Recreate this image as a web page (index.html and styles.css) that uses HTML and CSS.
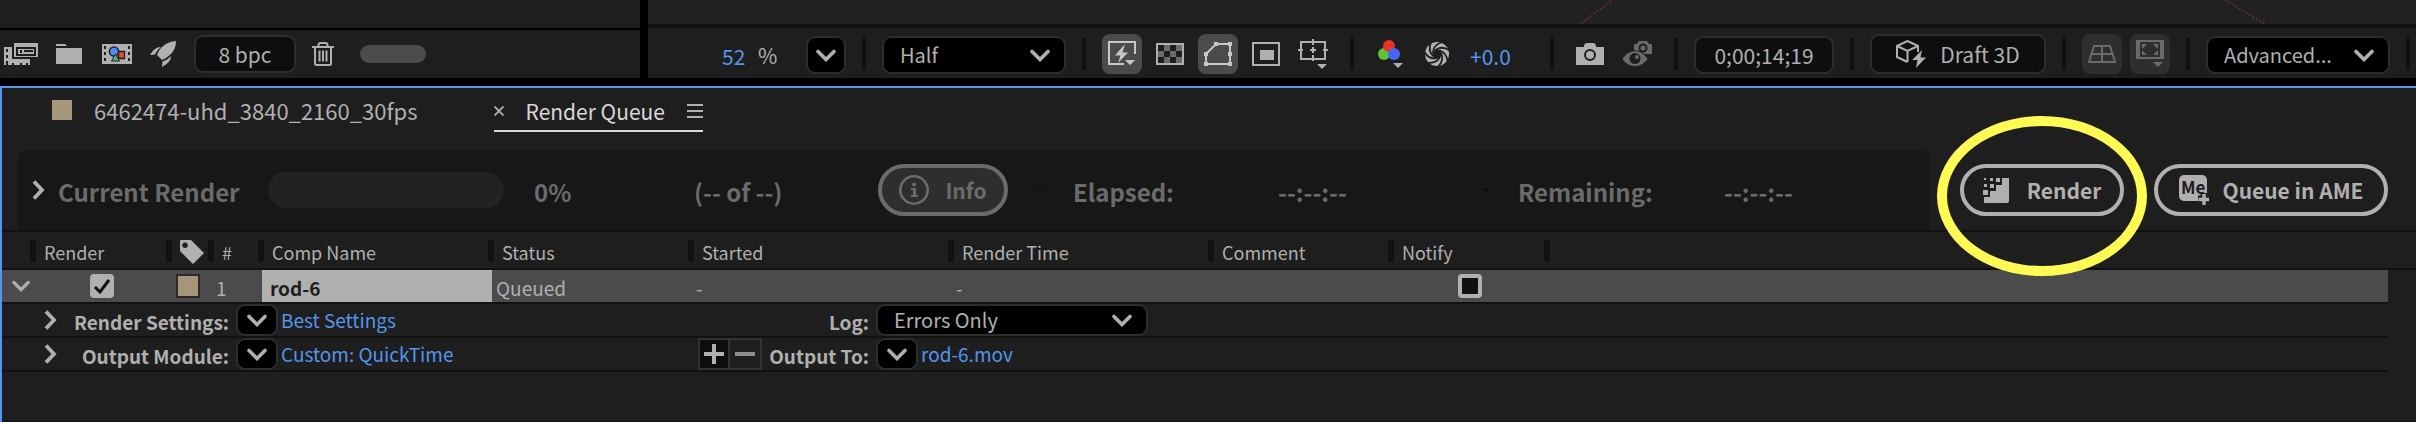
FILE: index.html
```html
<!DOCTYPE html>
<html lang="en">
<head>
<meta charset="utf-8">
<title>Render Queue</title>
<link rel="stylesheet" href="styles.css">
</head>
<body>
<svg class="defs" aria-hidden="true">
  <symbol id="chev-down" viewBox="0 0 20 13"><path d="M2 2.5 10 10.500 18 2.500" fill="none" stroke="currentColor" stroke-width="3.600" stroke-linecap="round"/></symbol>
  <symbol id="chev-right" viewBox="0 0 13 20"><path d="M2 1.500 10 10 2 18.500" fill="none" stroke="currentColor" stroke-width="3.800" stroke-linecap="butt"/></symbol>
</svg>
<div class="workspace">
  <section class="project" aria-label="Project">
    <div class="project-list"></div>
    <div class="toolbar project-tools">
      <button class="icon" aria-label="Interpret footage"><svg width="34" height="22" viewBox="0 0 34 22"><path d="M0 4h8v12h18v6H0z" fill="#b0b0b0"/><path d="M2 6h2v3H2zM2 12h2v3H2zM2 18h2v4H2zM8 20h2v2H8zM16 20h2v2h-2zM22 20h2v2h-2z" fill="#1e1e1e"/><path d="M10 0h24v14H10z" fill="#b0b0b0"/><path d="M12 4h20v9H12z" fill="#1e1e1e"/><path d="M14 6h16v5H14z" fill="#b0b0b0"/><path d="M16 7h2v3h-2zM20 7h9v2h-9z" fill="#1e1e1e"/></svg></button>
      <button class="icon" aria-label="New folder"><svg width="26" height="20" viewBox="0 0 26 20"><path d="M0 0h9l2 2H0zM0 4h25q1 0 1 1v14q0 1-1 1H1q-1 0-1-1z" fill="#b0b0b0"/></svg></button>
      <button class="icon film" aria-label="New composition"><svg width="30" height="20" viewBox="0 0 30 20"><path d="M0 0h30v20H0z" fill="#b0b0b0"/><path d="M2 2h2v3H2zM2 8h2v3H2zM2 14h2v3H2zM26 2h2v3h-2zM26 8h2v3h-2zM26 14h2v3h-2z" fill="#1e1e1e"/><circle cx="12" cy="7.500" r="4.600" fill="#4b8df8" stroke="#1e1e1e" stroke-width="1.500"/><path d="M16.500 7.500h6v7h-6z" fill="#e34b35" stroke="#1e1e1e" stroke-width="1.300"/><path d="M13.500 10 17.500 17H9.500z" fill="#4fb286" stroke="#1e1e1e"/></svg></button>
      <button class="icon" aria-label="Project settings"><svg width="26" height="26" viewBox="0 0 26 26"><path d="M26 0C26 9 21 15 12 19L7 14C10 6 16 1 26 0zM11 6C6 6 3 9 0 14L5 13.500C6.500 10 8.500 8 11 6zM21 15C21 20 17 23 12 26L12.500 20.500C16 19.500 19 17.500 21 15z" fill="#b0b0b0"/></svg></button>
      <button class="field depth">8 bpc</button>
      <button class="icon trash" aria-label="Delete"><svg width="22" height="24" viewBox="0 0 22 24"><path d="M0 5h22M6.500 5V3Q6.500 1 8.500 1h5Q15.500 1 15.500 3V5M3 5V21.500Q3 23 4.500 23h13Q19 23 19 21.500V5M7.500 8.500v11M11 8.500v11M14.500 8.500v11" fill="none" stroke="#b0b0b0" stroke-width="2"/></svg></button>
      <span class="scroll-thumb"></span>
    </div>
  </section>
  <section class="viewer" aria-label="Composition viewer">
    <svg class="canvas" aria-hidden="true"><g stroke="#54302c" stroke-width="2" stroke-dasharray="2 2"><path d="M933 24 964 0M1577 0 1617 24"/></g></svg>
    <div class="toolbar viewer-tools">
      <span class="zoom-value">52</span><span class="zoom-unit">%</span>
      <button class="field drop" aria-label="Magnification"><svg class="cd"><use href="#chev-down"/></svg></button>
      <span class="divider"></span>
      <div class="select-wrap"><select class="field wide" aria-label="Resolution"><option>Half</option></select><svg class="cd"><use href="#chev-down"/></svg></div>
      <span class="divider"></span>
      <div class="view-toggles">
        <button class="toggle on" aria-label="Fast previews"><svg width="28" height="26" viewBox="0 0 28 26"><path d="M16 24H1V2H27V14" fill="none" stroke="#c8c8c8" stroke-width="2" transform="translate(0 -1)"/><path d="M17 3 7 14.500h5.500L10 22 20 11.500h-5.500zM17 19h10l-5 5z" fill="#c8c8c8"/></svg></button>
        <button class="icon" aria-label="Transparency grid"><svg width="28" height="22" viewBox="0 0 28 22"><path d="M0 0h28v22H0z" fill="#b0b0b0"/><path d="M2 2h24v18H2z" fill="#6b6b6b"/><path d="M2 2h6v6H2zM14 2h6v6h-6zM8 8h6v6H8zM20 8h6v6h-6zM2 14h6v6H2zM14 14h6v6h-6z" fill="#1e1e1e"/></svg></button>
        <button class="toggle on" aria-label="Mask visibility"><svg width="28" height="24" viewBox="0 0 28 24"><path d="M2 12 12 2H26V22H2z" fill="none" stroke="#c8c8c8" stroke-width="2"/><path d="M10 0h4v4h-4zM24 0h4v4h-4zM0 10h4v4H0zM24 10h4v4h-4zM0 20h4v4H0zM24 20h4v4h-4z" fill="#c8c8c8"/></svg></button>
        <button class="icon" aria-label="Region of interest"><svg width="28" height="24" viewBox="0 0 28 24"><path d="M1 1h26v22H1z" fill="none" stroke="#b0b0b0" stroke-width="2"/><path d="M8 8h14v10H8z" fill="#b0b0b0"/></svg></button>
        <button class="icon guides" aria-label="Guides"><svg width="30" height="30" viewBox="0 0 30 30"><path d="M3 3h24v17H3zM15 0v6M15 16v6M0 11h5M25 11h5M12 11h6M15 8v6" fill="none" stroke="#b0b0b0" stroke-width="2"/><path d="M19 25h10l-5 5z" fill="#b0b0b0"/></svg></button>
      </div>
      <span class="divider wide-gap"></span>
      <button class="icon" aria-label="Channels"><svg width="26" height="30" viewBox="0 0 26 30"><circle cx="6" cy="15" r="6" fill="#5ec23c"/><circle cx="11" cy="7" r="6" fill="#ea3323"/><circle cx="16" cy="15" r="6" fill="#4866f6"/><path d="M15 24h10l-5 5z" fill="#b0b0b0"/></svg></button>
      <button class="icon aperture" aria-label="Exposure"><svg width="26" height="26" viewBox="0 0 26 26"><circle cx="13" cy="13" r="12" fill="#b0b0b0"/><circle cx="13" cy="13" r="4.500" fill="#1e1e1e"/><g fill="none" stroke="#1e1e1e" stroke-width="1.800"><path id="blade" d="M9 12C9 7 12 3 18 1"/><use href="#blade" transform="rotate(51 13 13)"/><use href="#blade" transform="rotate(103 13 13)"/><use href="#blade" transform="rotate(154 13 13)"/><use href="#blade" transform="rotate(206 13 13)"/><use href="#blade" transform="rotate(257 13 13)"/><use href="#blade" transform="rotate(309 13 13)"/></g></svg></button>
      <span class="exposure">+0.0</span>
      <span class="divider"></span>
      <div class="snapshots">
        <button class="icon" aria-label="Take snapshot"><svg width="28" height="22" viewBox="0 0 28 22"><path d="M0 4H8V2L10 0H18L20 2V4H28V22H0z" fill="#b0b0b0"/><circle cx="14" cy="12" r="5" fill="#b0b0b0" stroke="#1e1e1e" stroke-width="2"/></svg></button>
        <button class="icon" aria-label="Show snapshot"><svg width="30" height="26" viewBox="0 0 30 26"><path d="M12 3h3l2-3h8l2 3h3v10H12z" fill="#6b6b6b"/><circle cx="21" cy="7" r="3.500" fill="#6b6b6b" stroke="#1e1e1e" stroke-width="2"/><path d="M0 18C7 7 19 7 26 18C19 28 7 28 0 18z" fill="#6b6b6b" stroke="#1e1e1e"/><circle cx="13" cy="17.500" r="5.500" fill="#1e1e1e"/><circle cx="15" cy="16" r="2" fill="#6b6b6b"/></svg></button>
      </div>
      <span class="divider"></span>
      <button class="field time">0;00;14;19</button>
      <span class="divider"></span>
      <button class="field draft"><svg width="30" height="28" viewBox="0 0 30 28"><path d="M22 12V6L11.500 1 1 6V17L11.500 22M1 6 11.500 11 22 6M11.500 11V22" fill="none" stroke="#b0b0b0" stroke-width="2"/><path d="M26 10 16 20h5.500L20 28 30 17.500h-5.500z" fill="#b0b0b0"/></svg>Draft 3D</button>
      <span class="divider"></span>
      <div class="three-d">
        <button class="toggle off" aria-label="Ground plane"><svg width="28" height="18" viewBox="0 0 28 18"><path d="M6 1H22L27 17H1zM4 9H24M14 1V17" fill="none" stroke="#6b6b6b" stroke-width="2"/></svg></button>
        <button class="toggle off" aria-label="Extended viewer"><svg width="28" height="28" viewBox="0 0 28 28"><path d="M1 1h26v17H1z" fill="none" stroke="#6b6b6b" stroke-width="2"/><path d="M3 0v18M25 0v18" stroke="#6b6b6b" stroke-width="2"/><path d="M6 4h5L6 9zM22 4h-5l5 5zM6 15h5l-5-5zM22 15h-5l5-5zM17 22h10l-5 5z" fill="#6b6b6b"/></svg></button>
      </div>
      <span class="divider"></span>
      <div class="select-wrap"><select class="field wide" aria-label="Renderer"><option>Advanced...</option></select><svg class="cd"><use href="#chev-down"/></svg></div>
      <span class="divider last"></span>
    </div>
  </section>
</div>

<main class="queue">
  <nav class="tabs">
    <button class="tab file"><span class="swatch"></span>6462474-uhd_3840_2160_30fps</button>
    <div class="tab active">
      <button class="icon" aria-label="Close tab"><svg width="10" height="10" viewBox="0 0 10 10"><path d="M.5.5l9 9M9.500.5l-9 9" stroke="#b0b0b0" stroke-width="1.800"/></svg></button>
      <span>Render Queue</span>
      <button class="icon" aria-label="Panel menu"><svg width="16" height="14" viewBox="0 0 16 14"><path d="M0 1h16M0 7h16M0 13h16" stroke="#b0b0b0" stroke-width="2"/></svg></button>
    </div>
  </nav>

  <div class="status">
    <div class="current">
      <div class="current-title"><button class="icon" aria-label="Expand current render"><svg class="cr"><use href="#chev-right"/></svg></button><span class="text">Current Render</span></div>
      <div class="progress" role="progressbar" aria-label="Progress" aria-valuenow="0"></div>
      <span class="text percent">0%</span>
      <span class="text">(-- of --)</span>
      <button class="pill info" disabled><svg width="30" height="30" viewBox="0 0 30 30"><circle cx="15" cy="15" r="13.700" fill="none" stroke="#6b6b6b" stroke-width="2.600"/><circle cx="15" cy="9.500" r="2" fill="#6b6b6b"/><path d="M12 13h5v7h2v2h-7v-2h2v-5h-2z" fill="#6b6b6b"/></svg>Info</button>
      <span class="tick first"></span>
      <span class="text">Elapsed:</span>
      <span class="text">--:--:--</span>
      <span class="tick"></span>
      <span class="text">Remaining:</span>
      <span class="text">--:--:--</span>
    </div>
    <div class="actions">
      <div class="highlighted">
        <button class="pill"><svg width="26" height="26" viewBox="0 0 26 26"><path d="M26 1V24q0 2-2 2H1V20H7V14H13V8H19V1z" fill="#b0b0b0"/><path d="M1 1h2v2H1zM7 1h3v3H7zM13 1h4v4h-4zM1 7h3v3H1zM7 7h4v4H7zM0 13h5v5H0z" fill="#b0b0b0"/></svg>Render</button>
        <span class="ring"></span>
      </div>
      <button class="pill ame"><svg width="30" height="30" viewBox="0 0 30 30"><rect width="28" height="26" rx="5" fill="#b0b0b0"/><path d="M25 18v12M19 24h12" stroke="#1e1e1e" stroke-width="7"/><text class="me" x="2" y="19">Me</text><path d="M25 19v11M19.500 24.500h11" stroke="#b0b0b0" stroke-width="3.400"/></svg>Queue in AME</button>
    </div>
  </div>

  <table class="items">
    <colgroup><col class="c-arrow"><col class="c-render"><col class="c-tag"><col class="c-num"><col class="c-comp"><col class="c-status"><col class="c-started"><col class="c-time"><col class="c-comment"><col class="c-notify"><col><col class="c-edge"></colgroup>
    <thead><tr>
      <th></th><th>Render</th>
      <th class="tag"><svg width="24" height="24" viewBox="0 0 24 24" aria-label="Label"><path d="M0 1q0-1 1-1H11L24 13 13 24 0 11zM5 2.500a2.800 2.800 0 1 0 .01 0z" fill="#b0b0b0" fill-rule="evenodd"/></svg></th>
      <th>#</th><th>Comp Name</th><th>Status</th><th>Started</th><th>Render Time</th><th>Comment</th><th>Notify</th><th></th><th class="plain"></th>
    </tr></thead>
    <tbody>
      <tr class="selected">
        <td class="fold"><button class="icon" aria-label="Collapse item"><svg class="cd small"><use href="#chev-down"/></svg></button></td>
        <td class="center"><label class="check"><input type="checkbox" checked aria-label="Render item"><svg width="24" height="24" viewBox="0 0 24 24"><path d="M5 13 10 18 19 6" fill="none" stroke="#111" stroke-width="3"/></svg></label></td>
        <td class="tag"><span class="swatch framed"></span></td>
        <td>1</td><td class="name">rod-6</td><td>Queued</td><td>-</td><td>-</td><td></td>
        <td class="center notify"><label class="check"><input type="checkbox" aria-label="Notify"></label></td><td></td><td class="edge"></td>
      </tr>
      <tr><td class="detail" colspan="11"><div class="grid">
        <button class="icon unfold" aria-label="Expand render settings"><svg class="cr"><use href="#chev-right"/></svg></button>
        <b>Render Settings:</b>
        <button class="field mini" aria-label="Render settings template"><svg class="cd"><use href="#chev-down"/></svg></button>
        <a href="#">Best Settings</a>
        <span></span>
        <b><label for="log">Log:</label></b>
        <div class="select-wrap"><select id="log" class="field log"><option>Errors Only</option></select><svg class="cd"><use href="#chev-down"/></svg></div>
      </div></td><td class="edge"></td></tr>
      <tr><td class="detail" colspan="11"><div class="grid">
        <button class="icon unfold" aria-label="Expand output module"><svg class="cr"><use href="#chev-right"/></svg></button>
        <b>Output Module:</b>
        <button class="field mini" aria-label="Output module template"><svg class="cd"><use href="#chev-down"/></svg></button>
        <a href="#">Custom: QuickTime</a>
        <span class="stepper"><button aria-label="Add output module"><svg width="20" height="20"><path d="M10 0v20M0 10h20" stroke="#b0b0b0" stroke-width="4"/></svg></button><button class="minus" aria-label="Remove output module"><svg width="20" height="20"><path d="M0 10h20" stroke="#8c8c8c" stroke-width="4"/></svg></button></span>
        <b>Output To:</b>
        <span class="target"><button class="field mini" aria-label="Output file template"><svg class="cd"><use href="#chev-down"/></svg></button><a href="#">rod-6.mov</a></span>
      </div></td><td class="edge"></td></tr>
    </tbody>
  </table>
  <div class="rest"></div>
</main>
</body>
</html>
```
FILE: styles.css
```css
* { box-sizing: border-box; }
body {
  margin: 0;
  min-height: 100vh;
  display: flex;
  flex-direction: column;
  gap: 8px;
  overflow: hidden;
  background: #000;
  color: #b0b0b0;
  font: 21px/28px "Noto Sans CJK SC", "Noto Sans", sans-serif;
  white-space: nowrap;
}
button, select, input { margin: 0; font: inherit; color: inherit; }
button { border: 0; padding: 0; background: none; display: flex; align-items: center; justify-content: center; flex: none; }
svg { display: block; flex: none; }
a { color: #5496ec; text-decoration: none; }
.defs { position: absolute; width: 0; height: 0; }
.cd { width: 20px; height: 13px; }
.cd.small { width: 18px; height: 12px; }
.cr { width: 13px; height: 20px; }

/* upper workspace */
.workspace { display: flex; gap: 8px; height: 78px; }
.project { width: 640px; flex: none; display: flex; flex-direction: column; background: #1e1e1e; }
.project-list { height: 30px; border-bottom: 2px solid #000; }
.viewer { flex: 1; min-width: 0; display: flex; flex-direction: column; background: #1e1e1e; }
.canvas { width: 100%; height: 24px; background: #212121; }
.toolbar { display: flex; align-items: center; flex: 1; }
.toolbar > * { flex: none; }
.project-tools { padding-left: 4px; gap: 18px; }
.film { margin-left: 2px; }
.depth { width: 102px; height: 36px; }
.trash { margin-left: -2px; }
.scroll-thumb { width: 66px; height: 18px; margin-left: 8px; border-radius: 9px; background: #4b4b4b; }
.viewer-tools { border-top: 4px solid #111; padding: 2px 0 0 74px; }
.zoom-value { width: 36px; padding-top: 4px; color: #5496ec; }
.zoom-unit { width: 48px; padding-top: 2px; }
.field { height: 38px; border: 2px solid #2d2d2d; border-radius: 9px; background: #0e0e0e; }
.drop { width: 40px; background: #000; }
.drop, .time, .viewer-tools .select-wrap { margin-top: 2px; }
.divider { width: 4px; height: 32px; margin: 0 16px; background: #111; }
.divider.wide-gap { margin: 0 24px 0 22px; }
.divider.last { margin-right: 0; }
.select-wrap { display: grid; align-items: center; }
.select-wrap > * { grid-area: 1 / 1; }
.select-wrap .cd { justify-self: end; margin-right: 16px; pointer-events: none; }
select.field { appearance: none; background: #000; padding: 0 0 0 16px; font-size: 20px; }
.wide { width: 184px; }
.view-toggles { display: flex; align-items: center; gap: 14px; }
.guides { margin-left: 4px; }
.toggle { width: 40px; height: 40px; border-radius: 8px; }
.toggle.on { background: #4b4b4b; }
.toggle.off { background: #2e2e2e; }
.aperture { margin-left: 20px; }
.exposure { width: 84px; padding: 4px 0 0 20px; color: #5496ec; }
.snapshots { display: flex; align-items: center; gap: 18px; padding: 0 6px; }
.time { width: 140px; }
.draft { width: 176px; height: 40px; gap: 14px; }
.three-d { display: flex; gap: 8px; }

/* render queue panel */
.queue { flex: 1; display: flex; flex-direction: column; background: #1e1e1e; border: 2px solid #5496ec; border-right: 0; border-bottom: 0; }
.tabs { display: flex; align-items: flex-start; height: 62px; padding: 8px 0 0 50px; gap: 76px; }
.tab { display: flex; align-items: center; gap: 22px; height: 28px; }
.tab.file { font-size: 22px; }
.swatch { width: 20px; height: 20px; background: #a59779; }
.tab.active { height: 36px; border-bottom: 2px solid #d8d8d8; color: #d8d8d8; padding-bottom: 4px; }
.status { display: flex; height: 82px; padding-left: 16px; border-bottom: 2px solid #111; }
.current {
  flex: 1;
  display: grid;
  grid-template-columns: 250px 236px 190px 184px 130px 65px 205px 206px 34px 206px 1fr;
  align-items: center;
  border-radius: 10px 10px 0 0;
  background: #171717;
  color: #6b6b6b;
  font-size: 24px;
  font-weight: 700;
}
.current .text { padding-top: 4px; }
.current-title { display: flex; align-items: center; gap: 13px; padding-left: 14px; }
.current-title .icon { color: #b0b0b0; }
.progress { height: 36px; border-radius: 18px; background: #222; }
.current .percent { padding-left: 30px; }
.tick { width: 4px; height: 2px; background: #0c0c0c; }
.tick.first { margin-left: 30px; }
.pill { height: 52px; gap: 18px; border: 4px solid #b0b0b0; border-radius: 26px; font-size: 21px; font-weight: 700; }
.pill.info { width: 130px; gap: 16px; border-color: #6b6b6b; background: #2e2e2e; color: #6b6b6b; }
.actions { display: flex; align-items: center; gap: 30px; padding: 0 28px 0 30px; }
.highlighted { position: relative; z-index: 2; }
.highlighted .pill { width: 164px; }
.pill.ame { width: 234px; gap: 14px; }
.ring { position: absolute; inset: -48px -23px -60px; border: 10px solid #fffb54; border-radius: 50%; pointer-events: none; }
.me { font: 700 17px "Noto Sans CJK SC", sans-serif; fill: #1e1e1e; }

/* queue table */
.items { width: 100%; table-layout: fixed; border-collapse: separate; border-spacing: 0; }
.c-arrow { width: 32px; }
.c-render { width: 136px; }
.c-tag { width: 42px; }
.c-num { width: 50px; }
.c-comp { width: 230px; }
.c-status { width: 200px; }
.c-started, .c-time { width: 260px; }
.c-comment { width: 180px; }
.c-notify { width: 156px; }
.c-edge { width: 28px; }
th { position: relative; height: 38px; padding: 4px 0 0 10px; border-bottom: 2px solid #111; text-align: left; font-size: 18px; line-height: 24px; font-weight: 400; }
th + th::before { content: ""; position: absolute; left: -4px; top: 8px; width: 6px; height: 22px; background: #111; }
th.plain::before { display: none; }
td { height: 34px; padding: 4px 0 0 4px; border-bottom: 2px solid #111; font-size: 19px; }
.selected td { background: #4b4b4b; }
.selected td.name { padding-left: 8px; background: #b0b0b0; color: #1e1e1e; font-weight: 700; }
tr td.edge { padding: 0; border-bottom: 0; background: #1e1e1e; }
td.fold { padding: 0 0 0 10px; }
td.center { padding: 0; }
td.tag { padding: 0 0 0 6px; }
.check { display: grid; width: 24px; height: 24px; margin-left: 56px; }
.notify .check { margin-left: 66px; }
.check > * { grid-area: 1 / 1; }
.check svg { pointer-events: none; }
.check input { appearance: none; width: 24px; height: 24px; border: 4px solid #b0b0b0; border-radius: 4px; background: #111; }
.check input:checked { background: #b0b0b0; }
.swatch.framed { display: block; width: 24px; height: 24px; border: 2px solid #2a2a2a; }
td.detail { padding: 0; }
.grid { display: grid; grid-template-columns: 64px 170px 42px 420px 64px 114px 272px; align-items: center; height: 32px; }
.grid b { text-align: right; padding: 4px 7px 0 0; }
.grid a { padding-left: 3px; }
.unfold { justify-content: flex-end; padding-right: 9px; }
.mini { width: 42px; height: 32px; background: #000; }
.log { width: 272px; height: 32px; }
.stepper { display: flex; }
.stepper button { width: 32px; height: 32px; border: 2px solid #333; background: #0e0e0e; }
.stepper .minus { background: #1e1e1e; border-left: 0; }
.target { display: flex; align-items: center; }
.rest { flex: 1; border-bottom: 1px solid #111; }
```
